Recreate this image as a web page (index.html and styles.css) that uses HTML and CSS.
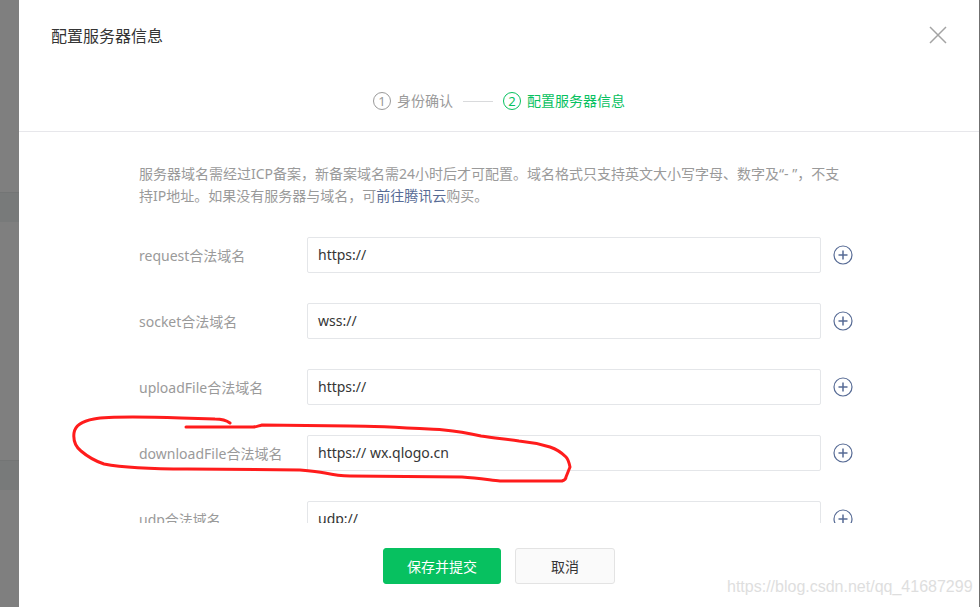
FILE: index.html
```html
<!DOCTYPE html>
<html lang="zh-CN">
<head>
<meta charset="utf-8">
<title>配置服务器信息</title>
<link rel="stylesheet" href="styles.css">
</head>
<body>
<div class="page">
  <div class="side">
    <div class="band band-a"></div>
    <div class="band band-b"></div>
  </div>
  <div class="dialog">
    <div class="dlg-head">
      <div class="title-row">
        <div class="title">配置服务器信息</div>
        <svg class="close" width="18" height="18" viewBox="0 0 18 18"><path d="M1 1L17 17M17 1L1 17" stroke="#a3a3a3" stroke-width="1.5" fill="none"/></svg>
      </div>
      <div class="steps">
        <div class="step done"><span class="num">1</span><span class="step-text">身份确认</span></div>
        <div class="step-line"></div>
        <div class="step active"><span class="num">2</span><span class="step-text">配置服务器信息</span></div>
      </div>
    </div>
    <div class="dlg-body">
      <p class="desc">服务器域名需经过ICP备案，新备案域名需24小时后才可配置。域名格式只支持英文大小写字母、数字及“- ”，不支持IP地址。如果没有服务器与域名，可<a class="link">前往腾讯云</a>购买。</p>
      <div class="row"><label class="lbl">request合法域名</label><div class="input">https://</div><svg class="plus" width="20" height="20" viewBox="0 0 20 20"><circle cx="10" cy="10" r="9" stroke="#576b95" stroke-width="1.2" fill="none"/><path d="M10 5.5V14.5M5.5 10H14.5" stroke="#576b95" stroke-width="1.5"/></svg></div>
      <div class="row"><label class="lbl">socket合法域名</label><div class="input">wss://</div><svg class="plus" width="20" height="20" viewBox="0 0 20 20"><circle cx="10" cy="10" r="9" stroke="#576b95" stroke-width="1.2" fill="none"/><path d="M10 5.5V14.5M5.5 10H14.5" stroke="#576b95" stroke-width="1.5"/></svg></div>
      <div class="row"><label class="lbl">uploadFile合法域名</label><div class="input">https://</div><svg class="plus" width="20" height="20" viewBox="0 0 20 20"><circle cx="10" cy="10" r="9" stroke="#576b95" stroke-width="1.2" fill="none"/><path d="M10 5.5V14.5M5.5 10H14.5" stroke="#576b95" stroke-width="1.5"/></svg></div>
      <div class="row"><label class="lbl">downloadFile合法域名</label><div class="input">https:// wx.qlogo.cn</div><svg class="plus" width="20" height="20" viewBox="0 0 20 20"><circle cx="10" cy="10" r="9" stroke="#576b95" stroke-width="1.2" fill="none"/><path d="M10 5.5V14.5M5.5 10H14.5" stroke="#576b95" stroke-width="1.5"/></svg></div>
      <div class="row"><label class="lbl">udp合法域名</label><div class="input">udp://</div><svg class="plus" width="20" height="20" viewBox="0 0 20 20"><circle cx="10" cy="10" r="9" stroke="#576b95" stroke-width="1.2" fill="none"/><path d="M10 5.5V14.5M5.5 10H14.5" stroke="#576b95" stroke-width="1.5"/></svg></div>
    </div>
    <div class="dlg-foot">
      <button class="btn btn-primary">保存并提交</button>
      <button class="btn btn-default">取消</button>
    </div>
  </div>
  <div class="edge"></div>
</div>
<svg class="scribble" width="980" height="607" viewBox="0 0 980 607">
  <path d="M230 423 C226 420 222 419 215 419 L181 418 C150 417 110 416 94 419 C82 421 75 426 74 433 C73 441 76 447 81 451 C88 457 95 461 104 464 C125 468 160 469 187 469 L300 470 C312 471 320 472 325 473 C334 475 340 476 350 476 L462 477 C478 478 490 480 500 481 L562 481 C565 480 566 479 566 477 L570 467 C569 462 568 459 566 457 C560 451 556 449 550 447 C540 444 530 442 519 441 C505 439 493 438 481 436 C468 433 456 431 444 430 C410 428 380 426 350 426 L262 425 C258 426 256 427 253 427 L186 427" stroke="#ff1c1c" stroke-width="3" fill="none" stroke-linecap="round" stroke-linejoin="round"/>
</svg>
<div class="watermark">https://blog.csdn.net/qq_41687299</div>
</body>
</html>
```
FILE: styles.css
```css
* { box-sizing: border-box; }
html, body {
  margin: 0;
  padding: 0;
  width: 980px;
  height: 607px;
  overflow: hidden;
  background: #7f7f7f;
  font-family: "Noto Sans", "Noto Sans CJK SC", sans-serif;
}
.page {
  display: flex;
  width: 980px;
  height: 607px;
}
.side {
  width: 19px;
  flex: none;
  display: flex;
  flex-direction: column;
}
.band {
  height: 30px;
  background: #787a7a;
  border-top: 1px solid #737575;
}
.band-a { margin-top: 192px; }
.band-b { margin-top: 238px; }
.edge {
  width: 1px;
  flex: none;
  background: #6f6f6f;
}
.dialog {
  width: 960px;
  flex: none;
  background: #fff;
  display: flex;
  flex-direction: column;
  height: 607px;
}
.dlg-head {
  flex: none;
  height: 132px;
  border-bottom: 1px solid #e7e7eb;
  padding-top: 24px;
}
.title-row {
  display: flex;
  align-items: center;
  justify-content: space-between;
  padding: 0 32px;
  height: 24px;
}
.title {
  font-size: 16px;
  line-height: 24px;
  color: #353535;
}
.close { display: block; margin-top: -2px; }
.steps {
  margin-top: 41px;
  height: 24px;
  display: flex;
  align-items: center;
  justify-content: center;
}
.step {
  display: flex;
  align-items: center;
  font-size: 14px;
  line-height: 24px;
}
.num {
  width: 18px;
  height: 18px;
  border: 1px solid currentColor;
  border-radius: 50%;
  display: flex;
  align-items: center;
  justify-content: center;
  font-size: 13px;
  line-height: 1;
  margin-right: 6px;
}
.step.done { color: #9a9a9a; }
.step.active { color: #07c160; }
.step-line {
  width: 30px;
  height: 1px;
  background: #d9dadc;
  margin: 0 10px;
}
.dlg-body {
  flex: none;
  height: 391px;
  overflow-y: auto;
  padding: 31px 120px 2px 120px;
}
.dlg-body::-webkit-scrollbar { width: 6px; }
.dlg-body::-webkit-scrollbar-track { background: transparent; }
.dlg-body::-webkit-scrollbar-thumb { background: #c1c1c1; }
.desc {
  margin: 0 0 30px 0;
  font-size: 14px;
  line-height: 22px;
  color: #9a9a9a;
  width: 712px;
}
.link { color: #576b95; text-decoration: none; }
.row {
  display: flex;
  align-items: center;
  height: 36px;
  margin-bottom: 30px;
}
.lbl {
  width: 168px;
  flex: none;
  font-size: 14px;
  color: #9a9a9a;
}
.input {
  width: 514px;
  height: 36px;
  flex: none;
  border: 1px solid #e4e6e9;
  border-radius: 2px;
  padding: 0 10px;
  font-size: 14px;
  line-height: 34px;
  color: #353535;
}
.plus { display: block; margin-left: 12px; flex: none; }
.dlg-foot {
  flex: 1;
  display: flex;
  justify-content: center;
  gap: 14px;
  padding-top: 25px;
}
.btn {
  height: 36px;
  border-radius: 3px;
  font-family: "Noto Sans", "Noto Sans CJK SC", sans-serif;
  font-size: 14px;
  min-width: 100px;
  padding: 0 23px;
  cursor: pointer;
}
.btn-primary {
  background: #07c160;
  border: 1px solid #07c160;
  color: #fff;
}
.btn-default {
  background: #fafafa;
  border: 1px solid #e3e3e3;
  color: #353535;
}
.scribble {
  position: absolute;
  left: 0;
  top: 0;
  pointer-events: none;
}
.watermark {
  position: absolute;
  left: 727px;
  top: 578px;
  font-family: "Liberation Sans", Arial, sans-serif;
  font-size: 16px;
  color: #dedede;
  white-space: nowrap;
}
```
